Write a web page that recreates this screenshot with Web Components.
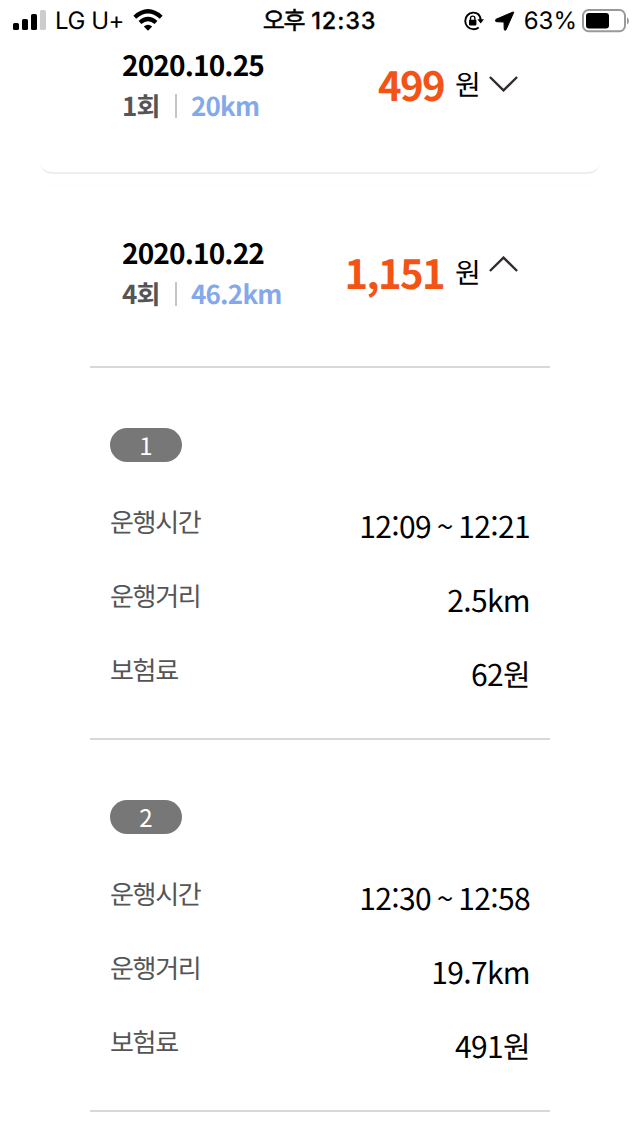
<!DOCTYPE html>
<html lang="ko"><head><meta charset="utf-8"><title>운행 내역</title>
<style>
body{margin:0;background:#fff;width:640px;height:1136px;overflow:hidden;font-family:"Noto Sans CJK KR","Noto Sans",sans-serif;color:#000;text-rendering:geometricPrecision}
</style></head><body>
<trip-app></trip-app>
<script>
const define=(name,html)=>{
  const t=document.createElement('template');t.innerHTML=html;
  customElements.define(name,class extends HTMLElement{
    constructor(){super();this.attachShadow({mode:'open'}).append(t.content.cloneNode(true));}
  });
};
define('status-bar',`<style>
:host{display:grid;grid-template-columns:1fr auto 1fr;height:40px;align-items:center;font:24px/40px Inter,"Noto Sans CJK KR",sans-serif;box-sizing:border-box;padding:0 11px 0 13px;white-space:nowrap}
div{display:flex;align-items:center;height:40px}svg{display:block;flex:none}
.l svg{margin-top:-2px}.l span{margin:1px 9px 0 9px;letter-spacing:-.45px}.c{font-weight:500;font-size:23.5px;letter-spacing:.85px;padding-top:1px;-webkit-text-stroke:.25px}.c span{font-weight:400;margin:0 7px 0 -3px;font-size:24px;letter-spacing:-1.3px;-webkit-text-stroke:.5px}
.r{justify-content:flex-end;margin-right:0}.r span{margin:1px 5px 0 9px;letter-spacing:0}
</style>
<div class="l"><svg width="33" height="22" viewBox="0 0 33 22"><rect y="14" width="6" height="7" rx="1.6"/><rect x="9" y="10" width="6" height="11" rx="1.6"/><rect x="18" y="5" width="6" height="16" rx="1.6"/><rect x="27" y="1" width="6" height="20" rx="1.6" fill="#ccc"/></svg><span>LG U+</span><svg width="30" height="22" viewBox="0 0 30 22" fill="none" stroke="#000" stroke-width="4.2"><path d="M1.8 8.2Q15-3.6 28.2 8.2"/><path d="M7 13.5Q15 6.5 23 13.5"/><path d="M15 21.8L10.8 17.6Q15 14 19.2 17.6Z" fill="#000" stroke="none"/></svg></div>
<div class="c"><span>오후</span>12:33</div>
<div class="r"><svg width="21" height="20" viewBox="0 0 21 20"><path d="M15.7 3.4A8.3 8.3 0 1 0 15.7 16.4M14.8 2.7A8.3 8.3 0 0 1 17.6 9" fill="none" stroke="#000" stroke-width="1.9"/><path d="M14.4 8.2H21L17.7 12.4Z"/><rect x="6" y="8.8" width="7.4" height="5.6" rx=".8"/><path d="M7.5 9V7.3a2.2 2.2 0 0 1 4.4 0V9" fill="none" stroke="#000" stroke-width="1.4"/></svg>
<svg width="20" height="20" viewBox="0 0 20 20" style="margin-left:11px"><path d="M18 1L1.2 8.2C0 8.8.1 10.6 1.6 10.7L9 11 9.2 18c0 1.5 1.4 1.8 2 .4L18.6 1.7c.2-.6 0-.9-.6-.7Z" stroke="#000" stroke-width="1"/></svg>
<span>63%</span><svg width="47" height="24" viewBox="0 0 47 24"><rect x="1" y="1" width="42" height="21.3" rx="5.6" fill="none" stroke="#999" stroke-width="2"/><rect x="4" y="4" width="23" height="15.5" rx="3"/><path d="M45 8.2Q47 9.5 47 12T45 15.5Z" fill="#999"/></svg></div>`);
define('chevron-icon',`<style>:host{display:block;width:29px;height:16px}:host([open]) svg{transform:scaleY(-1)}svg{display:block}</style>
<svg width="29" height="16" viewBox="0 0 29 16" fill="none" stroke="#332c2d" stroke-width="2.4"><path d="M.9 1L14.5 14.4L28.1 1"/></svg>`);
define('trip-summary',`<style>
:host{display:flex;justify-content:space-between;padding:0 82px;letter-spacing:-.04em;white-space:nowrap}
.date{font-size:28px;line-height:42px;font-weight:700;letter-spacing:-.03em}
.meta{display:flex;align-items:center;font-size:26px;line-height:40px;font-weight:700;color:#555;letter-spacing:-.03em}
.cnt{width:36px}i{width:2px;height:24px;background:#c4c4c4;margin:0 14px 0 17px}.km{color:#84a9ea}
.fare{display:flex;height:60px;margin-top:10px}
.amt{font-size:40px;line-height:60px;font-weight:700;color:#f35415;margin-right:11px;letter-spacing:-.04em}.won{width:26px;font-size:28px;line-height:60px;margin-right:8px}
.icon{margin-top:22px}:host([open]) .icon{margin-top:14px}
</style><div><div class="date"><slot name="date"></slot></div><div class="meta"><span class="cnt"><slot name="count"></slot></span><i></i><span class="km"><slot name="km"></slot></span></div></div>
<div class="fare"><span class="amt"><slot name="amount"></slot></span><span class="won">원</span><div class="icon"><slot name="icon"></slot></div></div>`);
define('trip-card',`<style>:host{display:block;margin:0 40px;box-sizing:border-box;border-radius:12px;border-bottom:2px solid #eee}</style><slot></slot>`);
define('trip-row',`<style>:host{display:flex;justify-content:space-between;height:74px;letter-spacing:-.04em}
.k{font-size:26px;line-height:37px;color:#555;letter-spacing:-.05em}.v{font-size:30px;line-height:44px;word-spacing:-2.2px}</style><span class="k"><slot name="k"></slot></span><span class="v"><slot></slot></span>`);
define('trip-detail',`<style>:host{display:block;box-sizing:border-box;height:372px;margin:0 50px;padding:60px 20px 0;border-top:2px solid #d8d8d8}
.n{width:72px;height:34px;border-radius:17px;background:#777;color:#fff;text-align:center;font-size:24px;line-height:34px;margin-bottom:41px}</style>
<div class="n"><slot name="n"></slot></div><slot></slot>`);
define('trip-app',`<style>:host{display:block}
.first{height:134px;padding-top:4px}.second{margin-top:10px;padding-top:47px;border-top:1px solid #fdfdfd;border-bottom:0}
.second trip-summary{height:134px}.end{height:2px;margin:0 50px;background:#d8d8d8}</style>
<status-bar></status-bar>
<trip-card class="first"><trip-summary><span slot="date">2020.10.25</span><span slot="count">1회</span><span slot="km">20km</span><span slot="amount">499</span><chevron-icon slot="icon"></chevron-icon></trip-summary></trip-card>
<trip-card class="second"><trip-summary open><span slot="date">2020.10.22</span><span slot="count">4회</span><span slot="km">46.2km</span><span slot="amount">1,151</span><chevron-icon open slot="icon"></chevron-icon></trip-summary>
<trip-detail><span slot="n">1</span><trip-row><span slot="k">운행시간</span>12:09 ~ 12:21</trip-row><trip-row><span slot="k">운행거리</span>2.5km</trip-row><trip-row><span slot="k">보험료</span>62원</trip-row></trip-detail>
<trip-detail><span slot="n">2</span><trip-row><span slot="k">운행시간</span>12:30 ~ 12:58</trip-row><trip-row><span slot="k">운행거리</span>19.7km</trip-row><trip-row><span slot="k">보험료</span>491원</trip-row></trip-detail>
<div class="end"></div></trip-card>`);
</script></body></html>
